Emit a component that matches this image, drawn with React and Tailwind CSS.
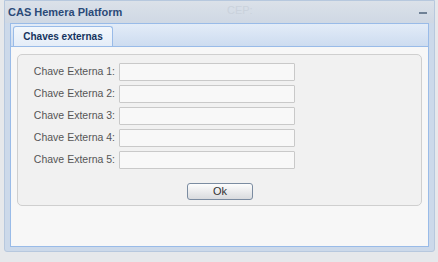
import React from 'react';

const font = { fontFamily: '"Liberation Sans", Arial, sans-serif' };

const Campo = ({ n }) => (
  <div className="flex items-center h-[18px]">
    <label className="w-[87px] pr-[4px] text-right text-[10.5px] text-[#555] whitespace-nowrap">
      Chave Externa {n}:
    </label>
    <input
      className="w-[176px] h-[18px] bg-[#f8f8f8] border border-[#c9c9c9] rounded-[1px] outline-none"
      type="text"
    />
  </div>
);

export default function App() {
  return (
    <div className="w-[438px] h-[262px] bg-[#e6e8eb] overflow-hidden" style={font}>
      <div className="ml-[4px] w-[431px] h-[252px] bg-[#ccd9ea] border border-[#b7c8de] rounded-b-[3px] flex flex-col">
        {/* titulo */}
        <div className="h-[22px] flex items-center justify-between pl-[3px] pr-[7px] bg-gradient-to-b from-[#dbe1e9] to-[#cfd8e4] relative">
          <span className="text-[11px] font-bold text-[#2b4a78]">CAS Hemera Platform</span>
          <span className="absolute left-[222px] top-[1px] text-[11px] text-[#cad2dc]">CEP:</span>
          <span className="w-[8px] h-[2px] bg-[#6f8196] mt-[2px]"></span>
        </div>

        <div className="mx-[5px] flex-1 mb-[4px] border border-[#99bbe8] bg-[#f7f7f7] flex flex-col">
          {/* abas */}
          <div className="h-[23px] bg-gradient-to-b from-[#e3ecf8] to-[#cddcf0] border-b border-[#99bbe8] flex items-end pl-[2px]">
            <div className="h-[20px] w-[100px] flex items-center justify-center bg-gradient-to-b from-[#f3f7fc] to-[#e4edf8] border border-b-0 border-[#99bbe8] rounded-t-[3px] text-[10px] font-bold text-[#15335e]">
              Chaves externas
            </div>
          </div>

          {/* corpo */}
          <div className="pt-[7px] px-[6px]">
            <div className="h-[152px] bg-[#f1f1f1] border border-[#cfcfcf] rounded-[5px] pt-[8px] pl-[14px]">
              <div className="flex flex-col gap-[4px]">
                {[1, 2, 3, 4, 5].map((n) => <Campo key={n} n={n} />)}
              </div>
              <div className="mt-[9px] pl-[155px]">
                <button className="w-[66px] h-[17px] border border-[#7b8ca1] rounded-[3px] bg-gradient-to-b from-[#fdfdfd] to-[#d9dbde] text-[11px] text-[#333] leading-none">
                  Ok
                </button>
              </div>
            </div>
          </div>
        </div>
      </div>
    </div>
  );
}
